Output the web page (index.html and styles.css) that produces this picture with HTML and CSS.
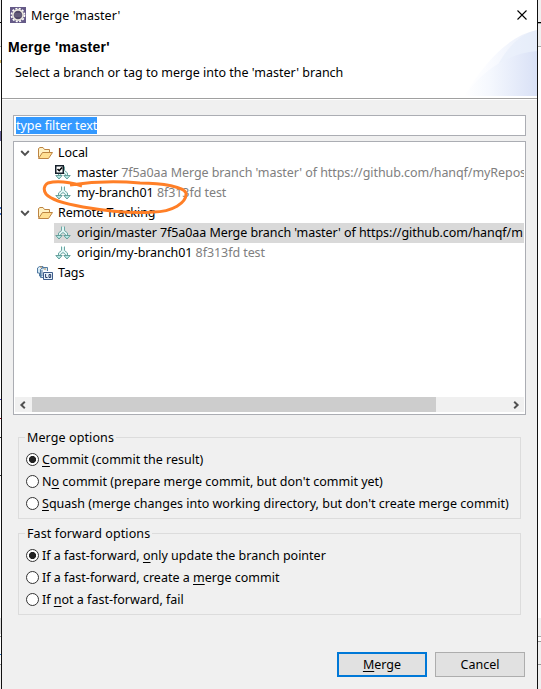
FILE: index.html
```html
<!DOCTYPE html>
<html lang="en">
<head>
<meta charset="utf-8">
<title>Merge 'master'</title>
<link rel="stylesheet" href="styles.css">
</head>
<body>
<svg width="0" height="0" class="defs" aria-hidden="true">
  <defs>
    <symbol id="folder" viewBox="0 0 16 16">
      <path d="M1.5 12.5V3.5L3 2.5H6L7.5 4.5H12.5V7" fill="#fff1c4" stroke="#bd8442"/>
      <path d="M1.5 13.5L5.5 7.5H15.5L11.5 13.5Z" fill="#ffdf92" stroke="#bd8442"/>
    </symbol>
    <symbol id="branch" viewBox="0 0 16 16">
      <path d="M7 2H9V6L13 9V11.5H11V10L8 8L5 10V11.5H3V9L7 6Z" fill="#dff5f4"/>
      <path d="M6.5 1.5V5.5L3.5 8V10.5M9.5 1.5V5.5L12.5 8V10.5M5.5 10.5V9.5L8 7.5L10.5 9.5V10.5" fill="none" stroke="#6ba7a3"/>
      <path d="M.8 10.5H7.2L4 14ZM8.8 10.5H15.2L12 14Z" fill="#b7e8e5" stroke="#5a9692" stroke-width=".9"/>
    </symbol>
    <symbol id="down" viewBox="0 0 10 10"><path d="M1.2 3L5 6.8L8.8 3" fill="none" stroke="#505050" stroke-width="1.9"/></symbol>
    <symbol id="left" viewBox="0 0 8 8"><path d="M5.8 .8L2.4 4L5.8 7.2" fill="none" stroke="#505050" stroke-width="2"/></symbol>
  </defs>
</svg>
<div class="backdrop">
  <div class="strip strip-left"></div>
  <main class="dialog">
    <div class="titlebar">
      <svg class="app" viewBox="0 0 16 16">
        <rect width="16" height="16" fill="#655a87"/>
        <circle cx="8" cy="8" r="6.5" fill="none" stroke="#fff" stroke-width="1.7" stroke-dasharray="2 1.4"/>
        <circle cx="8" cy="8" r="5.1" fill="#514866" stroke="#e9e7dd" stroke-width="1.6"/>
        <path d="M4 7H12M4 9H12" stroke="#77708c"/>
      </svg>
      <span class="caption">Merge 'master'</span>
      <svg class="close" viewBox="0 0 10 10"><path d="M.5 .5L9.5 9.5M9.5 .5L.5 9.5" stroke="#000" stroke-width="1.1"/></svg>
    </div>
    <header class="header">
      <h1>Merge 'master'</h1>
      <p>Select a branch or tag to merge into the 'master' branch</p>
      <svg class="art" viewBox="0 0 75 66">
        <defs>
          <linearGradient id="a"><stop offset="0" stop-color="#fff"/><stop offset=".3" stop-color="#fbfcff"/><stop offset="1" stop-color="#e7edfa"/></linearGradient>
          <linearGradient id="b"><stop offset="0" stop-color="#fff"/><stop offset=".35" stop-color="#f5f8fe"/><stop offset="1" stop-color="#d9e1f6"/></linearGradient>
        </defs>
        <path d="M2 66Q38 7 75 0V66Z" fill="url(#a)"/>
        <path d="M37 33Q52 6 75 0V66H37Z" fill="#e3ebfa" opacity=".5"/>
        <path d="M2 66Q32 25 75 21V66Z" fill="url(#b)"/>
      </svg>
    </header>
    <section class="body">
      <div class="filter"><span>type filter text</span></div>
      <div class="tree">
        <div class="row"><svg class="arrow"><use href="#down"/></svg><svg class="icon"><use href="#folder"/></svg><span>Local</span></div>
        <div class="row child"><svg class="icon" viewBox="0 0 16 16"><use href="#branch" width="16" height="16"/><rect x="0" y="0" width="9" height="9" fill="#15202b"/><path d="M1.5 1.5H7.5V7.5H1.5Z" fill="#fff"/><path d="M2.5 4L4.2 5.7L7 2.5" fill="none" stroke="#000" stroke-width="1.6"/></svg><span>master <i>7f5a0aa Merge branch 'master' of https://github.com/hanqf/myRepos</i></span></div>
        <div class="row child"><svg class="icon"><use href="#branch"/></svg><span>my-branch01 <i>8f313fd test</i></span></div>
        <div class="row"><svg class="arrow"><use href="#down"/></svg><svg class="icon"><use href="#folder"/></svg><span>Remote Tracking</span></div>
        <div class="row child selected"><svg class="icon"><use href="#branch"/></svg><span>origin/master 7f5a0aa Merge branch 'master' of https://github.com/hanqf/m</span></div>
        <div class="row child"><svg class="icon"><use href="#branch"/></svg><span>origin/my-branch01 <i>8f313fd test</i></span></div>
        <div class="row leaf"><svg class="icon" viewBox="0 0 16 16">
          <path d="M.5 3V8H2.5V11H5V5M.5 3L2.5 1.5H6V4M3.5 4.5L5.5 2.5H10.5V6M3.5 4.5V12.5H6" fill="#d4e8f4" stroke="#527ba2"/>
          <path d="M3 2H5M7 4H9" stroke="#c09052"/>
          <path d="M6.5 7.5H15.5V14.5H6.5Z" fill="#e8f3fc" stroke="#3c5c8b"/>
          <path d="M8.6 9V12.5H10.5M12 9.5H13.7V12.5H12Z" fill="none" stroke="#263c67"/></svg><span>Tags</span></div>
        <div class="scrollbar"><svg><use href="#left"/></svg><div class="thumb"></div><svg class="flip"><use href="#left"/></svg></div>
        <svg class="ink" viewBox="0 0 150 40"><path d="M40 6C27 2 14 1 6 3C2 5 1 10 4 14C9 20 24 24 41 27C65 31 88 34 111 32C130 32 145 23 144 13C142 7 121 3 98 3C76 1 48 2 28 5" fill="none" stroke="#ff7f27" stroke-width="3"/></svg>
      </div>
      <fieldset>
        <legend>Merge options</legend>
        <label><input type="radio" name="m" checked><span><u>C</u>ommit (commit the result)</span></label>
        <label><input type="radio" name="m"><span>N<u>o</u> commit (prepare merge commit, but don't commit yet)</span></label>
        <label><input type="radio" name="m"><span><u>S</u>quash (merge changes into working directory, but don't create merge commit)</span></label>
      </fieldset>
      <fieldset>
        <legend>Fast forward options</legend>
        <label><input type="radio" name="f" checked><span>If a fast-forward, <u>o</u>nly update the branch pointer</span></label>
        <label><input type="radio" name="f"><span>If a fast-forward, create a <u>m</u>erge commit</span></label>
        <label><input type="radio" name="f"><span>If <u>n</u>ot a fast-forward, fail</span></label>
      </fieldset>
      <div class="actions"><button class="primary"><u>M</u>erge</button><button>Cancel</button></div>
    </section>
  </main>
  <div class="strip strip-right"></div>
</div>
</body>
</html>
```
FILE: styles.css
```css
* { box-sizing: border-box; }
body { margin: 0; overflow: hidden; font: 12.5px/20px "Noto Sans", "Noto Sans CJK SC", sans-serif; color: #000; }
.defs { position: absolute; }
svg { flex: none; }
.backdrop { display: grid; grid-template-columns: 1px 537px 3px; height: 689px; }
.strip-left { background: linear-gradient(#f0f0f0 22px, #000 22px 23px, #f0f0f0 23px 46px, #aaa 46px 47px, #fff 47px 60px, #d9bd6b 60px 63px, #fff 63px 131px, #666199 131px 141px, #fff 141px 207px, #4777cf 207px 209px, #fff 209px 213px, #4777cf 213px 215px, #fff 215px 399px, #43b 399px 400px, #fff 400px 418px, #901 418px 419px, #fff 419px 437px, #333 437px 438px, #fff 438px 475px, #333 475px 476px, #fff 476px 618px, #ddd 618px 634px, #fff 634px 636px, #999 636px 637px, #fff 637px 654px, #2776c8 654px 655px, #fff 655px 664px, #999 664px 665px, #f0f0f0 665px); }
.strip-right { background: linear-gradient(#f0f0f0 22px, #000 22px 23px, #aaa 23px 24px, #f0f0f0 24px 46px, #aaa 46px 47px, #fff 47px 618px, #f0f0f0 618px 636px, #aaa 636px 637px, #fff 637px 641px, #999 641px 642px, #f0f0f0 642px 664px, #999 664px 665px, #f0f0f0 665px); }
.dialog { border: solid #111; border-width: 0 1px; background: #f0f0f0; display: flex; flex-direction: column; }
.titlebar { height: 29px; background: #fff; display: flex; align-items: center; padding: 0 10px 0 8px; }
.app { width: 16px; height: 16px; }
.caption { margin-left: 5px; flex: 1; letter-spacing: .05px; padding-top: 2px; }
.close { width: 10px; height: 10px; }
.header { position: relative; height: 71px; background: #fff; border-bottom: 1px solid #fff; box-shadow: inset 0 -1px #a0a0a0; padding: 8px 6px; }
h1 { margin: 0; font: bold 14px/20px "Liberation Sans", sans-serif; letter-spacing: .3px; }
.header p { margin: 6px 0 0 7px; line-height: 20px; }
.art { position: absolute; right: 0; top: 1px; width: 75px; height: 66px; }
.body { padding: 15px 11px 0; flex: 1; }
.filter { height: 21px; border: 1px solid #abadb3; background: #fff; padding: 1px 2px; line-height: 17px; }
.filter span { display: inline-block; height: 17px; background: #3399ff; color: #fff; letter-spacing: -.05px; }
.tree { position: relative; height: 274px; margin-top: 5px; border: 1px solid #abadb3; background: #fff; padding: 1px; display: flex; flex-direction: column; letter-spacing: -.07px; }
.row { display: flex; align-items: center; height: 20px; overflow: hidden; white-space: pre; padding-left: 5px; line-height: 20px; }
.row span { margin-left: 5px; }
.row i { font-style: normal; color: #808080; }
.icon { width: 16px; height: 16px; }
.arrow { width: 10px; height: 10px; margin-right: 7px; }
.child { padding-left: 1px; margin-left: 39px; }
.child span { margin-left: 6px; }
.leaf { padding-left: 22px; }
.selected { background: #d9d9d9; }
.scrollbar { margin-top: auto; height: 15px; margin-bottom: 1px; background: #f0f0f0; display: flex; align-items: center; justify-content: space-between; }
.scrollbar svg { width: 8px; height: 8px; margin: 0 4px; }
.scrollbar .thumb { width: 404px; height: 15px; background: #cdcdcd; margin: 0 auto 0 1px; }
.flip { transform: scaleX(-1); }
.ink { position: absolute; left: 28px; top: 38px; width: 150px; height: 40px; }
fieldset { margin: 12px 5px 0; padding: 0 7px; border: 1px solid #dcdcdc; height: 92px; min-width: 0; }
fieldset + fieldset { margin-top: 4px; }
legend { padding: 1px 2px 0; margin-left: -1px; height: 20px; line-height: 20px; letter-spacing: .1px; }
label { display: flex; align-items: center; height: 22px; white-space: nowrap; padding-top: 1px; }
label span { padding-top: 1px; }
label, input { vertical-align: top; }
legend + label { margin-top: 1px; }
input { appearance: none; flex: none; width: 13px; height: 13px; margin: 0 3px 0 0; border: 1px solid #333; border-radius: 50%; background: #fff; }
input:checked { background: radial-gradient(circle, #222 3.2px, #fff 3.9px); }
u { text-underline-offset: 2px; text-decoration-thickness: 1px; }
.actions { display: flex; justify-content: flex-end; gap: 8px; margin: 37px 1px 0 0; }
button { width: 90px; height: 25px; border: 1px solid #adadad; background: #e1e1e1; padding: 0; font: inherit; color: #000; }
.primary { border: 2px solid #0078d7; }
```
